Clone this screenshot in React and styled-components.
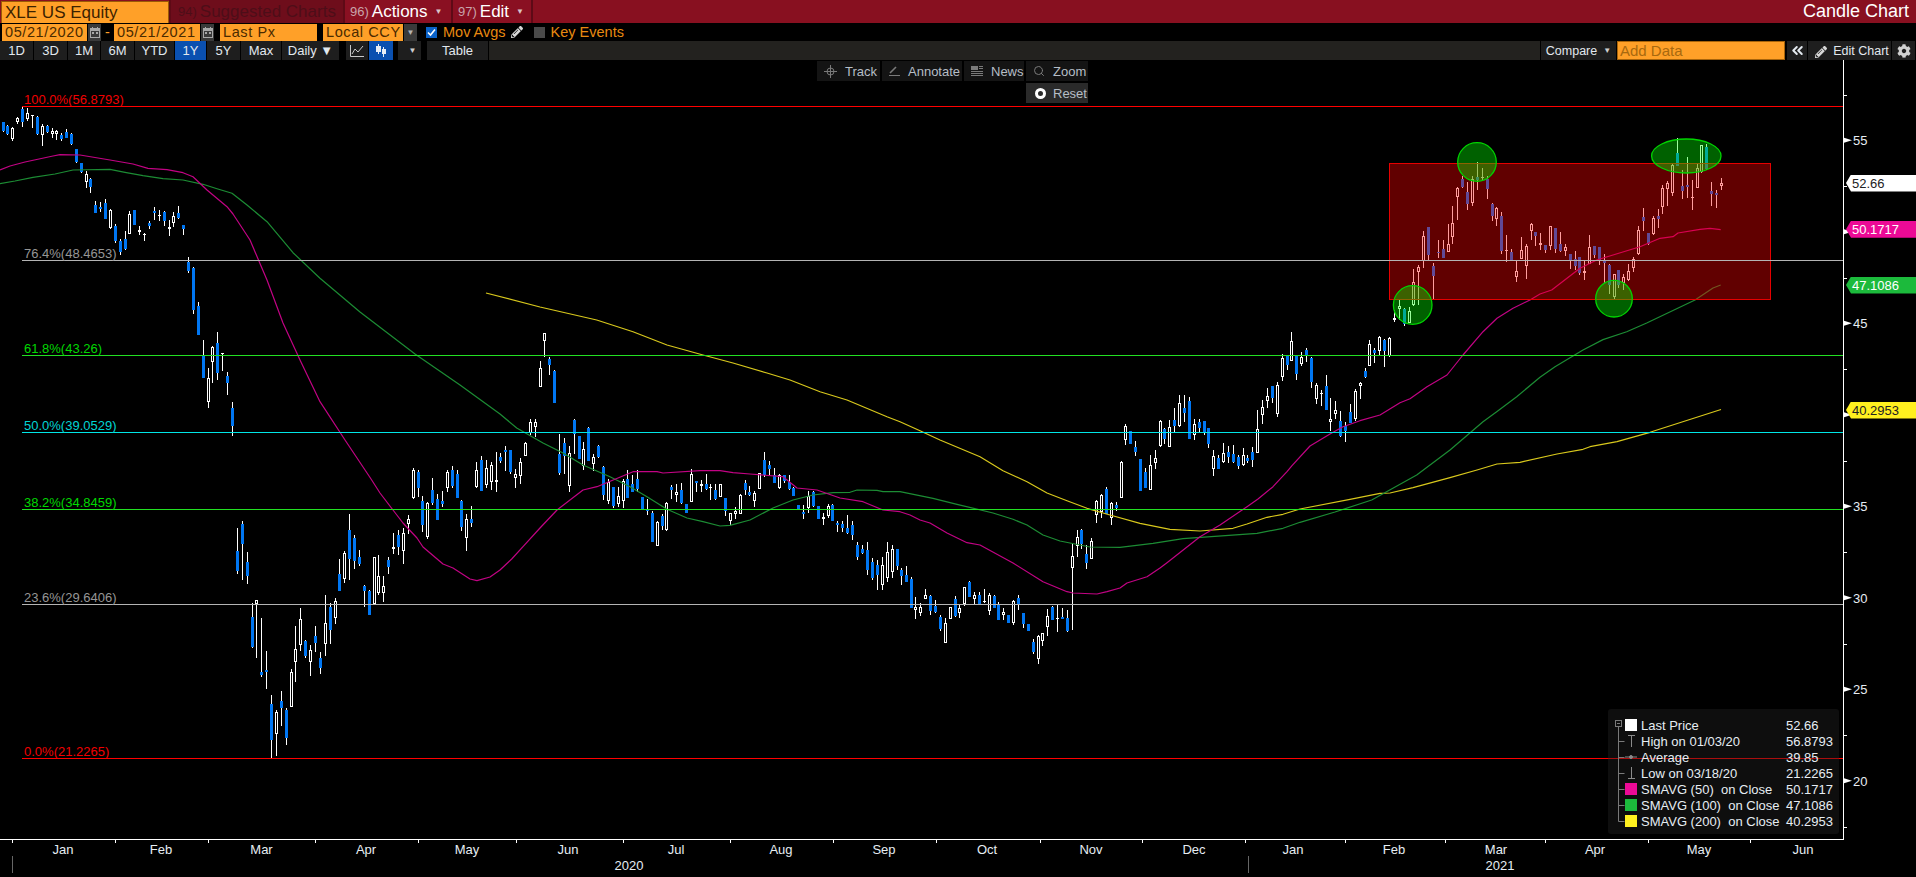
import React from "react";
import styled, { createGlobalStyle } from "styled-components";
import { FaCog, FaPencilAlt } from "react-icons/fa";
import { ChevronsLeft, Search } from "lucide-react";

const GlobalStyle = createGlobalStyle`
  html, body { margin: 0; padding: 0; background: #000; }
  body { font-family: "Liberation Sans", Arial, sans-serif; overflow: hidden; }
`;

// rows are [x, wick top, body top, body bottom, wick bottom, blue?] read off the crops
const seg = (ox, oy, rows, k = 3) =>
  rows.map(([x, wt, bt, bb, wb, blue]) => ({
    x: Math.round(ox + x / k),
    wt: Math.round(oy + wt / k),
    bt: Math.round(oy + bt / k),
    bb: Math.round(oy + bb / k),
    wb: Math.round(oy + wb / k),
    blue,
  }));

const candles = [
  ...seg(0, 90, [
    [10,95,97,122,125,1],[22,106,108,132,135,1],[37,110,114,148,153,0],[52,80,84,95,102,0],[67,50,57,95,110,1],
    [82,55,69,86,92,0],[97,75,76,79,113,0],[112,78,82,132,135,1],[127,103,108,134,167,0],[140,105,108,126,130,1],
    [155,115,124,131,143,0],[169,120,124,132,149,0],[184,128,135,146,152,1],[199,117,126,143,145,1],[214,128,132,162,165,1],
    [229,176,178,216,218,1],[244,218,220,245,248,1],[259,243,253,275,293,0],[271,264,268,292,308,1],[286,334,345,368,369,1],
    [301,337,351,356,367,1],[316,327,339,386,388,1],[331,358,361,414,418,0],[346,402,408,452,460,1],[361,447,453,485,495,1],
    [376,423,447,478,480,1],[388,364,372,431,432,0],[403,360,360,404,406,1],[418,407,421,425,434,0],[433,428,432,436,453,0],
    [448,392,399,408,416,1],[463,350,363,369,390,1],[478,360,375,379,392,0],[493,364,366,393,408,1],[508,390,412,416,438,0],
    [520,367,379,398,412,0],[535,348,370,384,387,1],[550,405,405,416,435,1],[565,501,516,542,548,1],[580,531,534,659,671,1],
    [595,636,648,735,736,1],[610,750,797,863,864,1],[625,835,865,937,953,0],[637,768,771,815,880,0],[652,727,760,848,870,1],
    [667,790,790,793,843,0],[682,847,858,879,914,1],[697,936,954,1007,1037,1],
  ]),
  ...seg(220, 480, [
    [52,144,213,272,282,1],[67,123,132,191,300,1],[82,216,246,287,311,1],[97,370,411,501,504,1],[109,361,361,372,533,0],
    [124,414,575,585,590,1],[139,513,570,576,627,1],[154,645,672,779,835,1],[169,690,696,761,828,0],[184,633,663,684,737,1],
    [199,684,690,773,795,1],[214,568,576,680,681,0],[226,438,507,545,605,0],[241,385,417,494,513,0],[256,480,483,528,533,1],
    [271,495,510,545,587,0],[286,438,468,489,516,1],[301,516,534,564,582,1],[316,345,430,491,528,0],[331,369,381,449,491,1],
    [346,354,364,414,432,0],[358,237,282,333,333,1],[373,213,220,296,308,0],[388,102,150,237,300,1],[403,166,174,243,267,1],
    [418,210,231,252,258,1],[433,316,318,333,381,1],[448,330,333,405,405,1],[463,232,232,371,372,0],[475,225,289,340,345,0],
    [490,288,319,338,366,0],[505,231,240,261,282,1],[520,159,202,206,222,0],[535,150,165,201,225,1],[550,144,159,212,252,0],
    [565,105,118,131,162,0],
  ]),
  ...seg(0, 0, [
    [413,468,470,498,499,0],[418,470,472,488,497,1],[422,496,501,525,532,1],[427,502,503,537,539,0],[432,478,490,503,505,1],
    [437,494,499,520,520,1],[442,491,501,504,507,1],[447,470,472,488,492,0],[452,466,470,486,488,1],[457,470,474,498,498,1],
    [461,500,501,527,531,1],[466,514,519,538,551,0],[471,506,519,523,527,1],[476,462,470,487,488,0],[481,456,460,491,491,1],
    [486,460,468,485,488,0],[491,462,465,482,490,0],[496,452,480,482,492,0],
  ], 1),
  ...seg(500, 320, [
    [0,398,411,423,428,1],[15,378,390,396,453,1],[30,390,390,457,461,1],[45,447,462,473,503,0],[60,414,426,467,491,0],
    [75,367,369,407,408,0],[91,297,306,338,345,0],[106,297,307,321,350,0],[121,123,144,200,201,0],[133,40,40,62,112,0],
    [148,111,117,135,165,1],[163,150,153,249,249,1],[178,343,402,460,465,1],[193,354,369,407,462,1],[208,378,400,498,516,0],
    [223,297,300,342,402,1],[238,348,348,417,417,1],[250,366,387,438,450,0],[265,321,324,423,423,1],[280,402,411,431,453,0],
    [295,375,378,411,414,1],[310,438,441,525,540,1],[325,477,486,543,552,0],[340,501,501,558,564,1],[355,501,528,552,560,0],
    [370,477,484,544,564,0],[382,450,477,534,534,1],[397,465,492,515,516,1],[412,450,477,507,517,1],[427,531,531,568,570,1],
    [442,537,567,572,585,1],[457,573,579,666,666,1],[472,604,606,677,678,0],[487,582,588,618,630,1],[499,547,550,630,632,0],
    [514,495,501,510,537,1],[529,492,516,525,546,0],[544,489,510,549,552,1],[559,552,552,579,579,1],[574,447,462,545,546,0],
    [589,484,484,489,516,1],[604,480,492,497,516,0],[619,462,492,507,510,1],[631,492,501,505,540,0],[646,492,510,537,540,1],
    [661,492,492,531,532,0],[676,534,534,573,588,1],[691,579,579,603,616,0],[706,561,573,582,597,0],[721,522,525,582,582,0],
    [736,480,489,510,525,1],[748,498,516,525,528,1],[763,513,519,543,561,0],[778,460,460,507,508,0],[793,396,420,466,472,1],
    [808,423,435,447,465,1],[823,444,465,489,490,1],[838,462,465,505,507,0],[853,465,465,483,490,1],[868,465,487,507,510,1],
    [880,501,504,528,529,1],[895,555,555,568,570,1],[910,555,576,582,597,1],[925,513,528,565,579,0],[940,513,516,558,560,1],
    [955,558,558,597,597,1],[970,579,592,596,615,0],[985,552,558,588,594,0],[997,552,555,603,603,1],[1012,603,609,615,636,1],
    [1027,603,612,624,636,1],[1042,585,624,639,642,1],[1057,603,615,645,661,1],[1072,666,675,711,720,1],[1087,675,687,699,702,1],
  ]),
  ...seg(0, 0, [
    [867,542,550,570,575,1],[872,558,562,578,580,1],[877,560,565,575,590,1],[882,557,565,585,590,0],[887,542,552,578,582,0],
    [892,545,549,572,578,0],[897,549,549,566,570,1],
  ], 1),
  ...seg(900, 400, [
    [4,504,510,528,555,1],[19,498,525,546,546,1],[34,531,537,624,625,1],[46,591,621,630,657,0],[61,609,621,639,648,0],
    [76,567,585,597,597,0],[91,585,588,633,645,1],[106,600,618,637,639,1],[121,645,651,687,693,1],[136,654,669,728,729,0],
    [151,621,621,656,657,0],[166,588,597,648,651,1],[178,615,624,639,654,0],[193,561,561,613,618,0],[208,543,546,591,591,1],
    [223,576,585,597,612,0],[238,576,585,612,613,1],[253,567,603,607,609,0],[268,579,585,633,645,0],[283,585,588,624,625,1],
    [295,606,615,660,660,1],[310,624,636,645,660,0],[325,645,645,669,669,1],[340,600,603,669,675,0],[355,585,594,612,630,1],
    [370,639,639,672,684,1],[385,672,672,693,693,1],[400,717,726,756,762,1],[415,705,708,777,792,0],[427,700,700,722,738,0],
    [442,627,648,680,708,0],[457,618,621,660,660,1],[472,615,653,657,696,0],[487,624,651,657,657,1],[502,630,654,693,696,1],
    [517,430,468,505,690,0],[532,390,411,437,471,0],[544,387,390,432,447,1],[559,435,462,489,507,1],[574,414,423,476,477,0],
    [589,300,303,346,369,0],[604,282,285,336,354,0],[619,261,267,342,342,1],[634,306,309,355,375,0],[649,306,315,325,333,1],
    [664,183,186,293,294,0],[676,72,78,120,135,0],[691,93,93,132,132,1],[706,123,141,156,168,1],[721,177,177,273,273,1],
    [736,204,216,264,264,1],[751,165,195,270,271,0],[766,150,174,189,207,0],[781,60,63,139,140,0],[793,84,87,117,132,1],
    [808,60,81,140,141,0],[823,24,60,78,100,1],[838,-15,10,79,80,0],[853,-15,24,39,66,1],[868,-10,3,117,118,1],
    [883,57,72,105,120,0],[898,57,66,84,96,1],[913,63,63,99,105,1],[925,84,84,132,144,1],[940,150,169,208,228,0],
    [955,165,174,207,207,1],[970,129,160,187,189,0],[985,138,156,171,189,1],[1000,135,162,186,189,1],[1015,165,171,198,207,1],
    [1030,144,166,196,198,0],[1042,165,174,184,189,1],
  ]),
  ...seg(1250, 300, [
    [7,441,456,480,501,1],[22,330,388,458,459,0],[37,300,322,344,372,0],[52,264,289,302,324,0],[67,258,258,294,309,1],
    [82,246,256,342,351,0],[97,162,175,231,243,0],[112,168,168,195,210,1],[124,96,124,182,184,0],[139,168,168,222,240,1],
    [154,156,172,192,198,0],[169,144,150,165,186,1],[184,171,174,246,264,1],[199,249,255,296,312,0],[214,270,278,282,318,0],
    [229,225,258,330,330,1],[241,294,358,366,393,0],[256,303,331,342,357,0],[271,333,363,408,411,1],[286,366,378,393,426,1],
    [301,312,336,369,369,1],[316,267,273,357,363,0],[331,246,250,258,297,0],[346,204,213,232,234,1],[358,120,133,197,198,0],
    [373,144,150,159,189,1],[388,108,111,153,165,0],[403,117,120,153,201,1],[418,111,115,168,171,0],
  ]),
  ...seg(1380, 120, [
    [43,570,595,600,607,0],[58,540,557,568,600,0],[73,565,567,612,618,1],[88,562,574,610,610,0],[100,447,487,556,557,0],
    [115,436,442,455,556,0],[130,333,348,424,445,0],[145,321,321,404,420,1],[160,430,438,467,540,1],[175,361,395,399,414,1],
    [190,360,388,413,414,1],[205,312,373,395,396,0],[217,258,310,350,372,0],[232,200,205,230,300,0],[247,168,178,201,204,1],
    [262,186,216,252,270,1],[277,168,178,249,258,0],[292,126,172,180,210,1],[307,144,172,175,180,0],[322,168,178,207,237,1],
    [337,249,252,288,303,1],[349,262,265,296,318,0],[364,276,288,393,402,1],[379,345,389,393,426,0],[394,387,396,420,420,1],
    [409,423,453,470,486,0],[424,351,390,416,417,0],[439,372,378,437,477,0],[454,309,313,333,360,0],[466,336,336,348,378,1],
    [481,339,369,374,390,0],[496,375,375,390,400,1],[511,318,319,378,391,0],[526,324,324,387,399,1],[541,336,372,393,396,1],
    [556,372,381,394,408,0],[571,402,402,420,447,1],[586,393,417,438,450,1],[598,411,411,459,465,1],[613,423,453,460,480,0],
    [628,345,381,431,432,0],[643,378,378,405,414,1],[658,381,381,420,435,1],[673,402,420,429,490,1],[688,432,435,496,522,1],
    [703,462,462,530,537,0],[715,450,450,495,505,1],[730,462,471,490,510,0],[745,432,453,481,483,0],[760,411,418,445,456,0],
    [775,318,331,403,404,0],[790,264,291,303,333,1],[805,339,339,372,375,1],[820,288,294,342,345,0],[835,267,288,297,324,1],
    [847,195,205,261,282,0],[862,183,190,206,258,0],[877,132,135,218,228,0],[892,54,99,138,138,1],[907,150,198,213,237,1],
    [922,111,195,201,234,1],[937,180,230,234,270,0],[952,132,145,203,204,0],[964,75,76,156,158,0],[979,72,81,147,150,1],
    [994,186,213,221,258,1],[1009,210,219,225,264,1],[1024,174,190,198,210,0],
  ]),
];

const sma50 = [[0,170],[10,166],[25,162],[53,156],[60,154.7],[80,155],[110,160],[133,164],[148,168.3],[167,169.7],[183,172.7],[193,176.7],[207,190],[227,206.7],[233,214],[250,240],[267,280],[283,323],[300,360],[320,401.7],[345,440],[371.7,480],[380,493],[393,510],[403,523],[417,538],[423,547],[443,564],[453,568],[470,579],[477,580.7],[490,577],[500,570],[511.7,559],[523,546.7],[540,528],[557,510],[583,490],[597,486.7],[633,471.7],[657,471.7],[663,473],[700,470.7],[720,470.7],[733,472.7],[750,474],[783,476.7],[797,488],[817,490],[840,498],[863,501.7],[883,510],[900,511.7],[910,515],[920,520],[930,523],[947,533],[967,542.7],[980,545],[1013,563],[1043,581.7],[1067,591.7],[1073,593],[1097,594],[1107,591.7],[1120,588],[1127,583],[1147,576.7],[1160,568],[1167,562.7],[1200,536.7],[1220,525],[1247,506.7],[1258,499],[1273,486.7],[1287,471.7],[1292,465.7],[1310,446],[1330,434],[1343,426.7],[1360,420.7],[1380,415],[1400,402.7],[1410,398.7],[1427,386.7],[1447,375],[1463,355],[1483,331.7],[1497,318.3],[1513,308.3],[1530,300],[1540,294],[1551.7,290],[1580,268.3],[1596.7,260],[1613,255],[1640,246.7],[1660,238.3],[1673,236.7],[1678,233],[1700,229.3],[1710,228.3],[1720.7,229.7]];
const sma100 = [[0,183.7],[15,181],[33,177.3],[55,174],[73,170],[110,169.3],[125,172.3],[143,175.7],[163,178.7],[183,180],[203,184.3],[217,188.7],[232,193.3],[247,205],[267,221.7],[293,252.7],[320,278.3],[360,312],[415,354],[460,385],[500,414],[516.7,428],[543,443],[563,453],[583,465],[610,476.7],[630,486.7],[647,496.7],[667,509.3],[687,518],[703,521.7],[720,526],[730,525.3],[750,520],[773,508],[793,500],[813,495],[833,492.7],[850,492.3],[857,490],[877,490.3],[883,491.7],[900,491.7],[933,498.3],[957,504.3],[993,513],[1013,519.3],[1027,525],[1043,535],[1060,541],[1090,547],[1120,547.3],[1153,543.3],[1183,538.7],[1257,533.3],[1283,528.3],[1300,522.3],[1335,512],[1371.7,500],[1416.7,475],[1450,450],[1483,421.7],[1496.7,411.7],[1516.7,396.7],[1540,377.3],[1555,366.7],[1583,350],[1603,339.6],[1626.7,331.7],[1646.7,323],[1695,300],[1713,288],[1720.7,285]];
const sma200 = [[486,293],[540,307],[596.7,320],[633,331.7],[667,345],[703,355],[733,363],[767,373],[790,380],[820,391.7],[847,400],[887,416.7],[900,421.7],[920,430.7],[940,440],[980,456.7],[1003,470.7],[1027,481.7],[1047,493],[1067,500.7],[1087,508.3],[1110,515],[1140,523.3],[1170,529.3],[1200,531],[1233,528.3],[1247,524],[1267,517.3],[1283,514.3],[1300,509],[1350,499.3],[1380,493.3],[1390,493],[1413,487.7],[1450,477.7],[1477,470],[1497,464],[1520,462.3],[1557,454],[1583,449.3],[1590,446.7],[1617,441.7],[1650,432.3],[1721,409.5]];

const wicks = candles.map((c) => `M${c.x} ${c.wt}h1V${c.wb}h-1z`).join("");
const hollow = candles.filter((c) => !c.blue);
const hollowOuter = hollow.map((c) => `M${c.x - 1} ${c.bt}h3V${Math.max(c.bb, c.bt + 1)}h-3z`).join("");
const hollowInner = hollow.filter((c) => c.bb - c.bt > 2).map((c) => `M${c.x} ${c.bt + 1}h1V${c.bb - 1}h-1z`).join("");
const filled = candles.filter((c) => c.blue).map((c) => `M${c.x - 1} ${c.bt}h3V${Math.max(c.bb, c.bt + 1)}h-3z`).join("");

const toPoints = (list) => list.map((p) => p.join(",")).join(" ");

const AXIS_X = 1843;
const AXIS_Y = 839;
const priceY = (p) => 323.3 + (45 - p) * 18.3;

const fibLevels = [
  { label: "100.0%(56.8793)", price: 56.8793, line: "#ff0000", text: "#f00000" },
  { label: "76.4%(48.4653)", price: 48.4653, line: "#b4b4b4", text: "#969696" },
  { label: "61.8%(43.26)", price: 43.26, line: "#22e022", text: "#00d800" },
  { label: "50.0%(39.0529)", price: 39.0529, line: "#00e6e6", text: "#00d4d4" },
  { label: "38.2%(34.8459)", price: 34.8459, line: "#22e022", text: "#00d800" },
  { label: "23.6%(29.6406)", price: 29.6406, line: "#b4b4b4", text: "#969696" },
  { label: "0.0%(21.2265)", price: 21.2265, line: "#ff0000", text: "#f00000" },
];

const months = [
  ["Jan", 63], ["Feb", 161], ["Mar", 261.5], ["Apr", 366], ["May", 467], ["Jun", 568], ["Jul", 676], ["Aug", 781], ["Sep", 884],
  ["Oct", 987], ["Nov", 1091], ["Dec", 1194], ["Jan", 1293], ["Feb", 1394], ["Mar", 1496], ["Apr", 1595], ["May", 1699], ["Jun", 1803],
];
const monthTicks = [12, 115, 208, 315, 418, 516, 623, 730, 833, 936, 1040, 1142, 1245, 1345, 1445, 1545, 1648, 1750];
const priceLabels = [55, 45, 35, 30, 25, 20];
const arrowPrices = [55, 50, 45, 40, 35, 30, 25, 20];
const minorPrices = [57.5, 52.5, 47.5, 42.5, 37.5, 32.5, 27.5, 22.5, 17.5];

const Page = styled.div`
  width: 1916px;
  height: 877px;
  display: flex;
  flex-direction: column;
  background: #000;
  overflow: hidden;
`;

const TitleBar = styled.div`
  height: 23px;
  flex: none;
  display: flex;
  align-items: stretch;
  background: #881020;
  font-size: 17px;
  color: #fff;
  margin-bottom: 1px;
`;

const TickerInput = styled.div`
  width: 163px;
  flex: none;
  margin: 1px 0 0 1px;
  padding-left: 3px;
  background: #ffa028;
  border: 1px solid #9a5a06;
  border-bottom: none;
  color: #3c2200;
  line-height: 21px;
  white-space: nowrap;
`;

const TitleMenu = styled.div`
  width: ${(p) => p.$w}px;
  flex: none;
  display: flex;
  align-items: center;
  padding-left: ${(p) => p.$pad}px;
  box-sizing: border-box;
  border-left: 2px solid #5e0a16;
  background: ${(p) => (p.$off ? "#6e0d1b" : "#8a1022")};
  color: ${(p) => (p.$off ? "#4d0d18" : "#fff")};
  white-space: nowrap;
`;

const MenuNum = styled.span`
  color: ${(p) => (p.$off ? "#4d0d18" : "#c9a3aa")};
  margin-right: 3px;
  font-size: 13px;
`;

const MenuCaret = styled.span`
  font-size: 8px;
  color: #d9c3c7;
  margin-left: 7px;
`;

const ChartName = styled.div`
  margin-left: auto;
  padding-right: 7px;
  font-size: 18px;
  line-height: 22px;
`;

const OptionRow = styled.div`
  height: 17px;
  flex: none;
  display: flex;
  align-items: stretch;
  font-size: 14.5px;
`;

const OrangeField = styled.div`
  width: ${(p) => p.$w}px;
  flex: none;
  margin-left: ${(p) => p.$gap || 0}px;
  box-sizing: border-box;
  padding-left: 3px;
  background: #ffa028;
  color: #4a2a00;
  line-height: 17px;
  white-space: nowrap;
  letter-spacing: 0.6px;
`;

const FieldButton = styled.div`
  width: ${(p) => p.$w}px;
  flex: none;
  margin-left: 1px;
  background: #3a3a3a;
  display: flex;
  align-items: center;
  justify-content: center;
  color: #b5b5b5;
  font-size: 8px;
`;

const Dash = styled.span`
  width: 13px;
  text-align: center;
  color: #ffa028;
  line-height: 16px;
`;

const CheckBox = styled.span`
  width: 11px;
  height: 11px;
  margin: 3px 6px 0 ${(p) => p.$gap}px;
  background: ${(p) => (p.$on ? "#0a62c8" : "#4a4a4a")};
  display: flex;
  align-items: center;
  justify-content: center;
`;

const OrangeLabel = styled.span`
  color: #e88a10;
  line-height: 17px;
  white-space: nowrap;
`;

const PenIcon = styled.span`
  margin: 2px 0 0 5px;
  color: #d8d8d8;
  font-size: 12px;
  display: flex;
`;

const RangeBar = styled.div`
  height: 19px;
  flex: none;
  display: flex;
  align-items: stretch;
  background: #000;
  font-size: 13px;
  color: #e2e8ee;
`;

const RangeButton = styled.div`
  width: ${(p) => p.$w}px;
  flex: none;
  margin-right: 1px;
  margin-left: ${(p) => p.$gap || 0}px;
  display: flex;
  align-items: center;
  justify-content: center;
  background: ${(p) => (p.$on ? "#0a50b0" : "#1e1e1e")};
  white-space: nowrap;
`;

const BarFill = styled.div`
  flex: 1;
  background: #23221f;
  margin-right: 1px;
`;

const SmallCaret = styled.span`
  font-size: 8px;
  margin-left: 6px;
  color: #cfcfcf;
`;

const EditLabel = styled.span`
  margin-left: 6px;
  font-size: 12.5px;
`;

const CompareLabel = styled.span`
  font-size: 12.5px;
`;

const AddData = styled.div`
  width: 168px;
  flex: none;
  margin: 0 2px 0 0;
  padding-left: 2px;
  box-sizing: border-box;
  background: #ffa028;
  border: 1px solid #a8640a;
  color: #a8690f;
  font-size: 15px;
  line-height: 17px;
`;

const ChartArea = styled.div`
  position: relative;
  flex: 1;
`;

const ChartSvg = styled.svg`
  display: block;
  font-family: "Liberation Sans", Arial, sans-serif;
  font-size: 13px;
`;

const FloatBar = styled.div`
  position: absolute;
  left: 817px;
  top: 1px;
  display: flex;
  gap: 2px;
  font-size: 13px;
  color: #b6bec6;
`;

const FloatButton = styled.div`
  width: ${(p) => p.$w}px;
  height: 20px;
  background: #141414;
  display: flex;
  align-items: center;
  gap: 8px;
  padding-left: 7px;
  box-sizing: border-box;
  color: #b6bec6;
`;

const ResetButton = styled.div`
  position: absolute;
  left: 1026px;
  top: 23px;
  width: 62px;
  height: 20px;
  background: #2a2a2a;
  display: flex;
  align-items: center;
  gap: 7px;
  padding-left: 9px;
  box-sizing: border-box;
  font-size: 13px;
  color: #b6bec6;
`;

const ResetDot = styled.span`
  width: 5px;
  height: 5px;
  border: 3px solid #fff;
  border-radius: 50%;
`;

const PriceTag = styled.div`
  position: absolute;
  left: 1846px;
  top: ${(p) => p.$y - 60 - 8.5}px;
  width: 70px;
  height: 17px;
  box-sizing: border-box;
  padding-left: 6px;
  background: ${(p) => p.$bg};
  color: ${(p) => p.$fg};
  font-size: 13px;
  line-height: 17px;
  clip-path: polygon(0 50%, 5px 0, 100% 0, 100% 100%, 5px 100%);
`;

const Legend = styled.div`
  position: absolute;
  left: 1608px;
  top: 649px;
  width: 231px;
  height: 125px;
  box-sizing: border-box;
  padding: 8px 0 0 17px;
  background: rgba(36, 36, 36, 0.39);
  border-radius: 3px;
  font-size: 13px;
  color: #e6edf3;
`;

const LegendRail = styled.svg`
  position: absolute;
  left: 0;
  top: 0;
`;

const LegendRow = styled.div`
  height: 16px;
  display: flex;
  align-items: center;
  white-space: pre;
`;

const Swatch = styled.span`
  width: 12px;
  height: 12px;
  margin-right: 4px;
  flex: none;
  background: ${(p) => p.$color};
`;

const LegendName = styled.span`
  width: 145px;
  flex: none;
`;

const CalendarIcon = () => (
  <svg width="10" height="11" viewBox="0 0 10 11">
    <path d="M0 1h10v10H0z M1 4v6h8V4z" fill="#a8a8a8" fillRule="evenodd" />
    <path d="M2 0h1v2H2zM7 0h1v2H7zM2 5h2v2H2zM6 5h2v2H6z" fill="#a8a8a8" />
  </svg>
);

const LineIcon = () => (
  <svg width="14" height="12" viewBox="0 0 14 12" fill="none" stroke="#c8c8c8" strokeWidth="1">
    <path d="M.5 0v11.5H14" />
    <path d="M2 9l3-5 3 3 5-6" />
  </svg>
);

const CandleIcon = () => (
  <svg width="10" height="13" viewBox="0 0 10 13" fill="#e8eef5">
    <path d="M2 0h1v2H2zM0 2h5v6H0zM2 8h1v2H2zM7 3h1v2H7zM6 5h4v5H6zM7 10h1v3H7z" />
  </svg>
);

const TrackIcon = () => (
  <svg width="13" height="13" viewBox="0 0 13 13" fill="none" stroke="#7a7a7a">
    <circle cx="6.5" cy="6.5" r="3.5" />
    <path d="M6.5 0v13M0 6.5h13" />
  </svg>
);

const AnnotateIcon = () => (
  <svg width="11" height="10" viewBox="0 0 11 10" fill="none" stroke="#7a7a7a">
    <path d="M1 7l6-6" strokeWidth="1.6" />
    <path d="M0 9.5h11" />
  </svg>
);

const NewsIcon = () => (
  <svg width="12" height="11" viewBox="0 0 12 11" fill="#7a7a7a">
    <path d="M0 0h7v4H0zM8 0h4v1H8zM8 2h4v1H8zM0 5h12v1H0zM0 7h12v1H0zM0 9h12v1H0z" />
  </svg>
);

const TreeGlyph = ({ kind }) => (
  <svg width="12" height="14" viewBox="0 0 12 14" fill="none" stroke="#8a8a8a" style={{ marginRight: 4, flex: "none" }}>
    {kind === "high" && <path d="M3 1.5h7M6.5 1.5V13" />}
    {kind === "avg" && (
      <>
        <path d="M0 7h12" />
        <circle cx="6" cy="7" r="1.5" fill="#8a8a8a" />
      </>
    )}
    {kind === "low" && <path d="M3 12.5h7M6.5 12.5V1" />}
  </svg>
);

function Chart() {
  return (
    <ChartSvg width="1916" height="817" viewBox="0 60 1916 817" shapeRendering="crispEdges">
      <path d={wicks + hollowOuter} fill="#fff" />
      <path d={hollowInner} fill="#000" />
      <path d={filled} fill="#0076f2" />
      <g fill="none" strokeWidth="1.2" shapeRendering="auto" strokeLinejoin="round">
        <polyline points={toPoints(sma200)} stroke="#d8c81c" />
        <polyline points={toPoints(sma100)} stroke="#1c8c34" />
        <polyline points={toPoints(sma50)} stroke="#c20384" />
      </g>
      <rect x="1389.5" y="163.5" width="381" height="136" fill="rgba(255,0,0,0.38)" stroke="#e60000" />
      <g fill="rgba(0,255,0,0.38)" stroke="#00d400" strokeWidth="1.3" shapeRendering="auto">
        <circle cx="1412.7" cy="305" r="19.3" />
        <circle cx="1477" cy="162" r="19.3" />
        <circle cx="1614" cy="298.7" r="18.3" />
        <ellipse cx="1686.3" cy="156" rx="34.7" ry="17" />
      </g>
      {fibLevels.map((f) => (
        <g key={f.label}>
          <rect x="22" y={Math.round(priceY(f.price))} width={AXIS_X - 22} height="1" fill={f.line} />
          <text x="24" y={Math.round(priceY(f.price)) - 2} fill={f.text}>{f.label}</text>
        </g>
      ))}
      <rect x={AXIS_X} y="60" width="1" height={AXIS_Y - 59} fill="#fff" />
      <rect x="0" y={AXIS_Y} width={AXIS_X} height="1" fill="#fff" />
      {minorPrices.map((p) => (
        <rect key={p} x={AXIS_X + 1} y={Math.round(priceY(p))} width="3" height="1" fill="#fff" />
      ))}
      {arrowPrices.map((p) => (
        <path key={p} d={`M${AXIS_X + 1} ${priceY(p) - 2.5}L${AXIS_X + 9} ${priceY(p)}L${AXIS_X + 1} ${priceY(p) + 2.5}z`} fill="#fff" shapeRendering="auto" />
      ))}
      {priceLabels.map((p) => (
        <text key={p} x={AXIS_X + 10} y={priceY(p) + 5} fill="#e6edf3">{p}</text>
      ))}
      {monthTicks.map((x) => (
        <rect key={x} x={x} y={AXIS_Y} width="1" height="4" fill="#fff" />
      ))}
      {months.map(([name, x]) => (
        <text key={x} x={x} y="854" textAnchor="middle" fill="#e6edf3">{name}</text>
      ))}
      <rect x="12" y="856" width="1" height="17" fill="#666" />
      <rect x="1248" y="856" width="1" height="17" fill="#666" />
      <text x="629" y="870" textAnchor="middle" fill="#e6edf3">2020</text>
      <text x="1500" y="870" textAnchor="middle" fill="#e6edf3">2021</text>
    </ChartSvg>
  );
}

export default function App() {
  return (
    <Page>
      <GlobalStyle />
      <TitleBar>
        <TickerInput>XLE US Equity</TickerInput>
        <TitleMenu $w={174} $pad={7} $off>
          <MenuNum $off>94)</MenuNum>Suggested Charts
        </TitleMenu>
        <TitleMenu $w={108} $pad={5}>
          <MenuNum>96)</MenuNum>Actions<MenuCaret>▼</MenuCaret>
        </TitleMenu>
        <TitleMenu $w={80} $pad={5}>
          <MenuNum>97)</MenuNum>Edit<MenuCaret>▼</MenuCaret>
        </TitleMenu>
        <TitleMenu $w={2} $pad={0} />
        <ChartName>Candle Chart</ChartName>
      </TitleBar>
      <OptionRow>
        <OrangeField $w={85} $gap={2}>05/21/2020</OrangeField>
        <FieldButton $w={13}><CalendarIcon /></FieldButton>
        <Dash>-</Dash>
        <OrangeField $w={86}>05/21/2021</OrangeField>
        <FieldButton $w={13}><CalendarIcon /></FieldButton>
        <OrangeField $w={97} $gap={6}>Last Px</OrangeField>
        <OrangeField $w={80} $gap={6}>Local CCY</OrangeField>
        <FieldButton $w={13}>▼</FieldButton>
        <CheckBox $on $gap={9}>
          <svg width="9" height="9" viewBox="0 0 9 9" fill="none" stroke="#fff" strokeWidth="1.6">
            <path d="M1 4.5l2.5 2.5L8 1.5" />
          </svg>
        </CheckBox>
        <OrangeLabel>Mov Avgs</OrangeLabel>
        <PenIcon><FaPencilAlt /></PenIcon>
        <CheckBox $gap={11} />
        <OrangeLabel>Key Events</OrangeLabel>
      </OptionRow>
      <RangeBar>
        <RangeButton $w={33}>1D</RangeButton>
        <RangeButton $w={33}>3D</RangeButton>
        <RangeButton $w={32}>1M</RangeButton>
        <RangeButton $w={33}>6M</RangeButton>
        <RangeButton $w={39}>YTD</RangeButton>
        <RangeButton $w={31} $on>1Y</RangeButton>
        <RangeButton $w={33}>5Y</RangeButton>
        <RangeButton $w={40}>Max</RangeButton>
        <RangeButton $w={57}>Daily&nbsp;▼</RangeButton>
        <RangeButton $w={22} $gap={6}><LineIcon /></RangeButton>
        <RangeButton $w={24} $on><CandleIcon /></RangeButton>
        <RangeButton $w={23} $gap={4}><SmallCaret>▼</SmallCaret></RangeButton>
        <RangeButton $w={61} $gap={5}>Table</RangeButton>
        <BarFill />
        <RangeButton $w={75}><CompareLabel>Compare</CompareLabel><SmallCaret>▼</SmallCaret></RangeButton>
        <AddData>Add Data</AddData>
        <RangeButton $w={20}><ChevronsLeft size={17} strokeWidth={2.8} /></RangeButton>
        <RangeButton $w={83}>
          <PenIcon><FaPencilAlt /></PenIcon><EditLabel>Edit Chart</EditLabel>
        </RangeButton>
        <RangeButton $w={23}><FaCog size={14} color="#d0d0d0" /></RangeButton>
      </RangeBar>
      <ChartArea>
        <Chart />
        <FloatBar>
          <FloatButton $w={63}><TrackIcon />Track</FloatButton>
          <FloatButton $w={80}><AnnotateIcon />Annotate</FloatButton>
          <FloatButton $w={60}><NewsIcon />News</FloatButton>
          <FloatButton $w={62}><Search size={12} color="#7a7a7a" />Zoom</FloatButton>
        </FloatBar>
        <ResetButton><ResetDot />Reset</ResetButton>
        <PriceTag $y={183} $bg="#fff" $fg="#222">52.66</PriceTag>
        <PriceTag $y={229.3} $bg="#ec0a96" $fg="#fff">50.1717</PriceTag>
        <PriceTag $y={285} $bg="#1cba3c" $fg="#fff">47.1086</PriceTag>
        <PriceTag $y={410} $bg="#fff01f" $fg="#222">40.2953</PriceTag>
        <Legend>
          <LegendRail width="20" height="125" fill="none" stroke="#7a7a7a">
            <rect x="7.5" y="11.5" width="6" height="6" />
            <path d="M9 14.5h3M10.5 18v94.5h6M10.5 32.5h6M10.5 48.5h6M10.5 64.5h6M10.5 80.5h6M10.5 96.5h6" />
          </LegendRail>
          <LegendRow><Swatch $color="#fff" /><LegendName>Last Price</LegendName>52.66</LegendRow>
          <LegendRow><TreeGlyph kind="high" /><LegendName>High on 01/03/20</LegendName>56.8793</LegendRow>
          <LegendRow><TreeGlyph kind="avg" /><LegendName>Average</LegendName>39.85</LegendRow>
          <LegendRow><TreeGlyph kind="low" /><LegendName>Low on 03/18/20</LegendName>21.2265</LegendRow>
          <LegendRow><Swatch $color="#ec0a96" /><LegendName>SMAVG (50)  on Close</LegendName>50.1717</LegendRow>
          <LegendRow><Swatch $color="#1cba3c" /><LegendName>SMAVG (100)  on Close</LegendName>47.1086</LegendRow>
          <LegendRow><Swatch $color="#fff01f" /><LegendName>SMAVG (200)  on Close</LegendName>40.2953</LegendRow>
        </Legend>
      </ChartArea>
    </Page>
  );
}
